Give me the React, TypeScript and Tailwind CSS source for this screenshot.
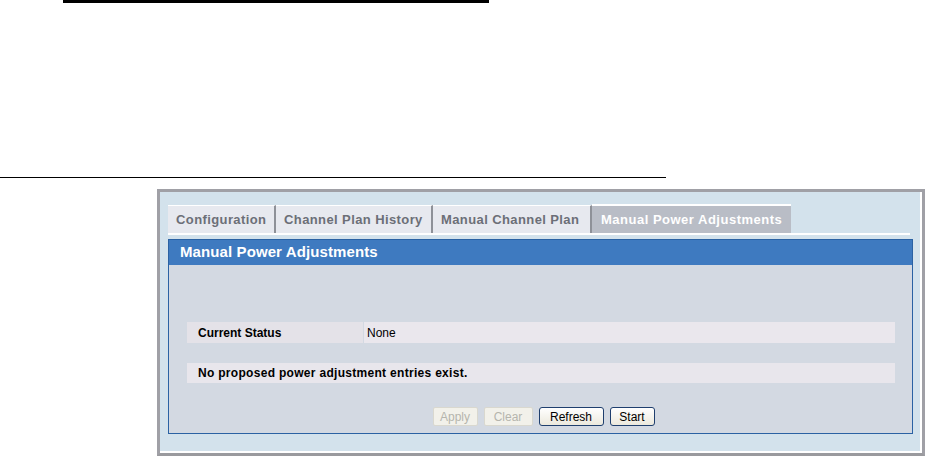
import React from "react";

const tabs = ["Configuration", "Channel Plan History", "Manual Channel Plan"];
const tabWidths = ["w-[108px]", "w-[157px]", "w-[159px]"];

export default function App() {
  return (
    <div className="w-[927px] h-[460px] bg-white overflow-hidden font-['Liberation_Sans',Arial,sans-serif]">
      <div className="ml-[63px] w-[426px] h-[3px] bg-black" />
      <div className="mt-[174px] w-[666px] h-px bg-black" />
      <div className="mt-[11px] ml-[157px] w-[768px] h-[267px] border-[3px] border-[#a0a0a6] border-b-[#9a9a9e]">
        <div className="h-full bg-[#d3e2ec] border-r-2 border-b-2 border-white pt-[12px] pl-[8px] pr-[8px]">
          {/* tabs */}
          <div className="flex items-end h-[29px]">
            {tabs.map((t, i) => (
              <div
                key={t}
                className={`${tabWidths[i]} h-[28px] bg-[#e7e9ef] border-t border-white border-r-2 border-r-[#8e9198] flex items-center pl-[8px] text-[13px] font-bold tracking-[0.4px] text-[#6c6f77] whitespace-nowrap`}
              >
                {t}
              </div>
            ))}
            <div className="w-[199px] h-[29px] bg-[#b9bdc6] border-t-2 border-white flex items-center pl-[9px] text-[13px] font-bold tracking-[0.5px] text-white whitespace-nowrap">
              Manual Power Adjustments
            </div>
          </div>
          <div className="h-[2px] bg-white mr-[2px]" />
          {/* panel */}
          <div className="mt-[4px] w-[745px] h-[195px] border border-[#2b62a3] bg-[#d3d9e2] flex flex-col">
            <div className="h-[25px] bg-[#3e7ac0] flex items-center pl-[11px] text-[15px] font-bold tracking-[0.1px] text-white">
              Manual Power Adjustments
            </div>
            <div className="mt-[57px] ml-[18px] mr-[17px] flex h-[21px] text-[12px] text-black">
              <div className="w-[176px] bg-[#e4e2e8] flex items-center pl-[11px] font-bold">Current Status</div>
              <div className="flex-1 ml-px bg-[#eae7ed] flex items-center pl-[3px]">None</div>
            </div>
            <div className="mt-[20px] ml-[18px] mr-[17px] h-[20px] bg-[#e8e6ec] flex items-center pl-[11px] text-[12px] font-bold text-black tracking-[0.3px]">
              No proposed power adjustment entries exist.
            </div>
            <div className="mt-[24px] flex justify-center gap-[6px] pl-[6px] text-[12px]">
              <button className="h-[19px] w-[45px] rounded-[2px] border border-[#d9d8cf] bg-[#f2f1ea] text-[#b5b5ad]">Apply</button>
              <button className="h-[19px] w-[49px] rounded-[2px] border border-[#d9d8cf] bg-[#f2f1ea] text-[#b5b5ad]">Clear</button>
              <button className="h-[19px] w-[65px] rounded-[3px] border border-[#1f3f6e] bg-gradient-to-b from-white to-[#ece9dd] text-black">Refresh</button>
              <button className="h-[19px] w-[45px] rounded-[3px] border border-[#1f3f6e] bg-gradient-to-b from-white to-[#ece9dd] text-black">Start</button>
            </div>
          </div>
        </div>
      </div>
    </div>
  );
}
